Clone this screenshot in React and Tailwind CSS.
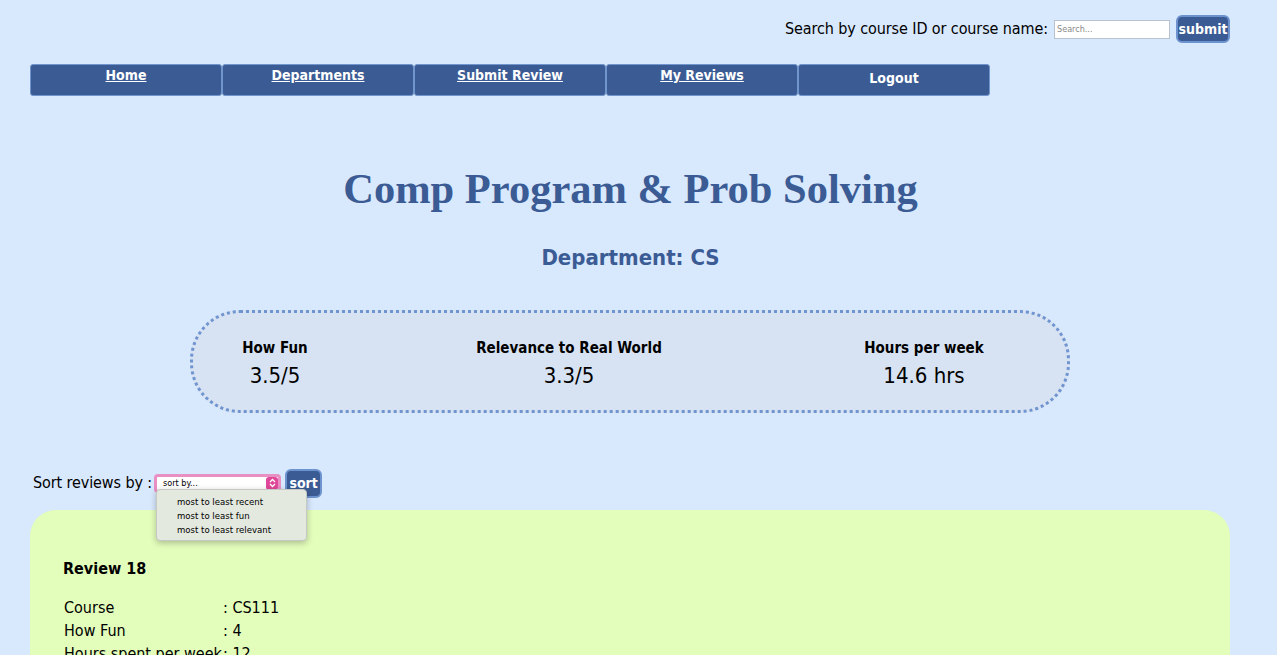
const font = { fontFamily: '"DejaVu Sans Condensed", "DejaVu Sans", sans-serif' }

const navItems = ['Home', 'Departments', 'Submit Review', 'My Reviews']

const stats = [
  { label: 'How Fun', value: '3.5/5', w: 'w-[164px]' },
  { label: 'Relevance to Real World', value: '3.3/5', w: 'w-[424px]' },
  { label: 'Hours per week', value: '14.6 hrs', w: 'w-[286px]' },
]

const rows = [
  ['Course', 'CS111'],
  ['How Fun', '4'],
  ['Hours spent per week', '12'],
  ['Relevance', '3'],
]

const App = () => {
  return (
    <div className="min-h-screen bg-[#d8e8fd] text-black overflow-hidden" style={font}>
      {/* Search */}
      <div className="flex items-center justify-end pr-[47px] pt-[15px] h-[43px]">
        <span className="text-[16px] mr-[6px] tracking-[-0.1px]">Search by course ID or course name:</span>
        <input
          placeholder="Search..."
          className="w-[116px] h-[19px] bg-white border border-[#b9c3cf] text-[9px] px-[2px] placeholder:text-[#8a8a8a] outline-none"
        />
        <button className="ml-[6px] w-[54px] h-[28px] rounded-[6px] bg-[#3b5b94] border-2 border-[#6d93cf] text-white text-[14px] font-bold px-0">
          submit
        </button>
      </div>

      {/* Nav */}
      <div className="flex ml-[30px] mt-[21px]">
        {navItems.map((n) => (
          <a
            key={n}
            href="#"
            className="w-[192px] h-[32px] bg-[#3b5b94] border border-[#7096cd] rounded-[3px] text-white font-bold text-[14px] text-center underline pt-[1px] leading-[18px]"
          >
            {n}
          </a>
        ))}
        <button className="w-[192px] h-[32px] bg-[#3b5b94] border border-[#7096cd] rounded-[3px] text-white font-bold text-[14px] pb-[4px]">
          Logout
        </button>
      </div>

      {/* Course heading */}
      <div className="pr-[16px]">
        <h1
          className="text-center text-[#3b5b94] text-[42.5px] font-bold mt-[69px] leading-[48px]"
          style={{ fontFamily: '"Liberation Serif", serif' }}
        >
          Comp Program &amp; Prob Solving
        </h1>
        <h2 className="text-center text-[#3b5b94] text-[22px] font-bold mt-[31px] leading-[28px]">Department: CS</h2>
      </div>

      {/* Stats */}
      <div className="mt-[38px] ml-[190px] w-[880px] h-[103px] rounded-[50px] border-[3px] border-dotted border-[#6f94d0] bg-[#d7e3f2] flex items-start pt-[25px]">
        {stats.map((s) => (
          <div key={s.label} className={`${s.w} shrink-0 flex flex-col items-center`}>
            <span className="text-[15px] font-bold leading-[20px]">{s.label}</span>
            <span className="text-[22px] leading-[28px] mt-[4px]">{s.value}</span>
          </div>
        ))}
      </div>

      {/* Sort */}
      <div className="flex items-center ml-[33px] mt-[55px] h-[30px] relative">
        <span className="text-[16px] tracking-[-0.1px]">Sort reviews by :</span>
        <div className="ml-[2px] w-[127px] h-[19px] rounded-[4px] border-[3px] border-[#e88fc3] bg-white flex items-center">
          <span className="flex-1 text-[9px] pl-[6px] leading-none">sort by...</span>
          <span className="w-[12px] h-[13px] rounded-[3px] bg-[#e0479a] flex flex-col items-center justify-center">
            <svg width="7" height="10" viewBox="0 0 7 10" fill="none" stroke="white" strokeWidth="1.3">
              <path d="M1 4 L3.5 1.5 L6 4" />
              <path d="M1 6 L3.5 8.5 L6 6" />
            </svg>
          </span>
        </div>
        <button className="ml-[4px] w-[37px] h-[29px] rounded-[6px] bg-[#3b5b94] border-2 border-[#6d93cf] text-white text-[14px] font-bold px-0">
          sort
        </button>

        {/* Open select menu */}
        <div className="absolute left-[123px] top-[21px] z-10 w-[151px] h-[52px] rounded-[4px] bg-[#e4e9df] border border-[#c6c9c3] shadow-[0_2px_6px_rgba(0,0,0,0.25)] pt-[5px] pl-[20px] text-[9.5px] leading-[14px]">
          <div>most to least recent</div>
          <div>most to least fun</div>
          <div>most to least relevant</div>
        </div>
      </div>

      {/* Review card */}
      <div className="ml-[30px] mt-[12px] w-[1200px] rounded-t-[26px] bg-[#e3fdbb] pl-[33px] pt-[49px] pb-[40px]">
        <h3 className="text-[16px] font-bold leading-[20px]">Review 18</h3>
        <table className="mt-[17px] ml-[1px] text-[16px]">
          <tbody>
            {rows.map(([k, v]) => (
              <tr key={k} className="h-[23px]">
                <td className="w-[159px] leading-[20px] p-0">{k}</td>
                <td className="leading-[20px] p-0">: {v}</td>
              </tr>
            ))}
          </tbody>
        </table>
      </div>
    </div>
  )
}

export default App
